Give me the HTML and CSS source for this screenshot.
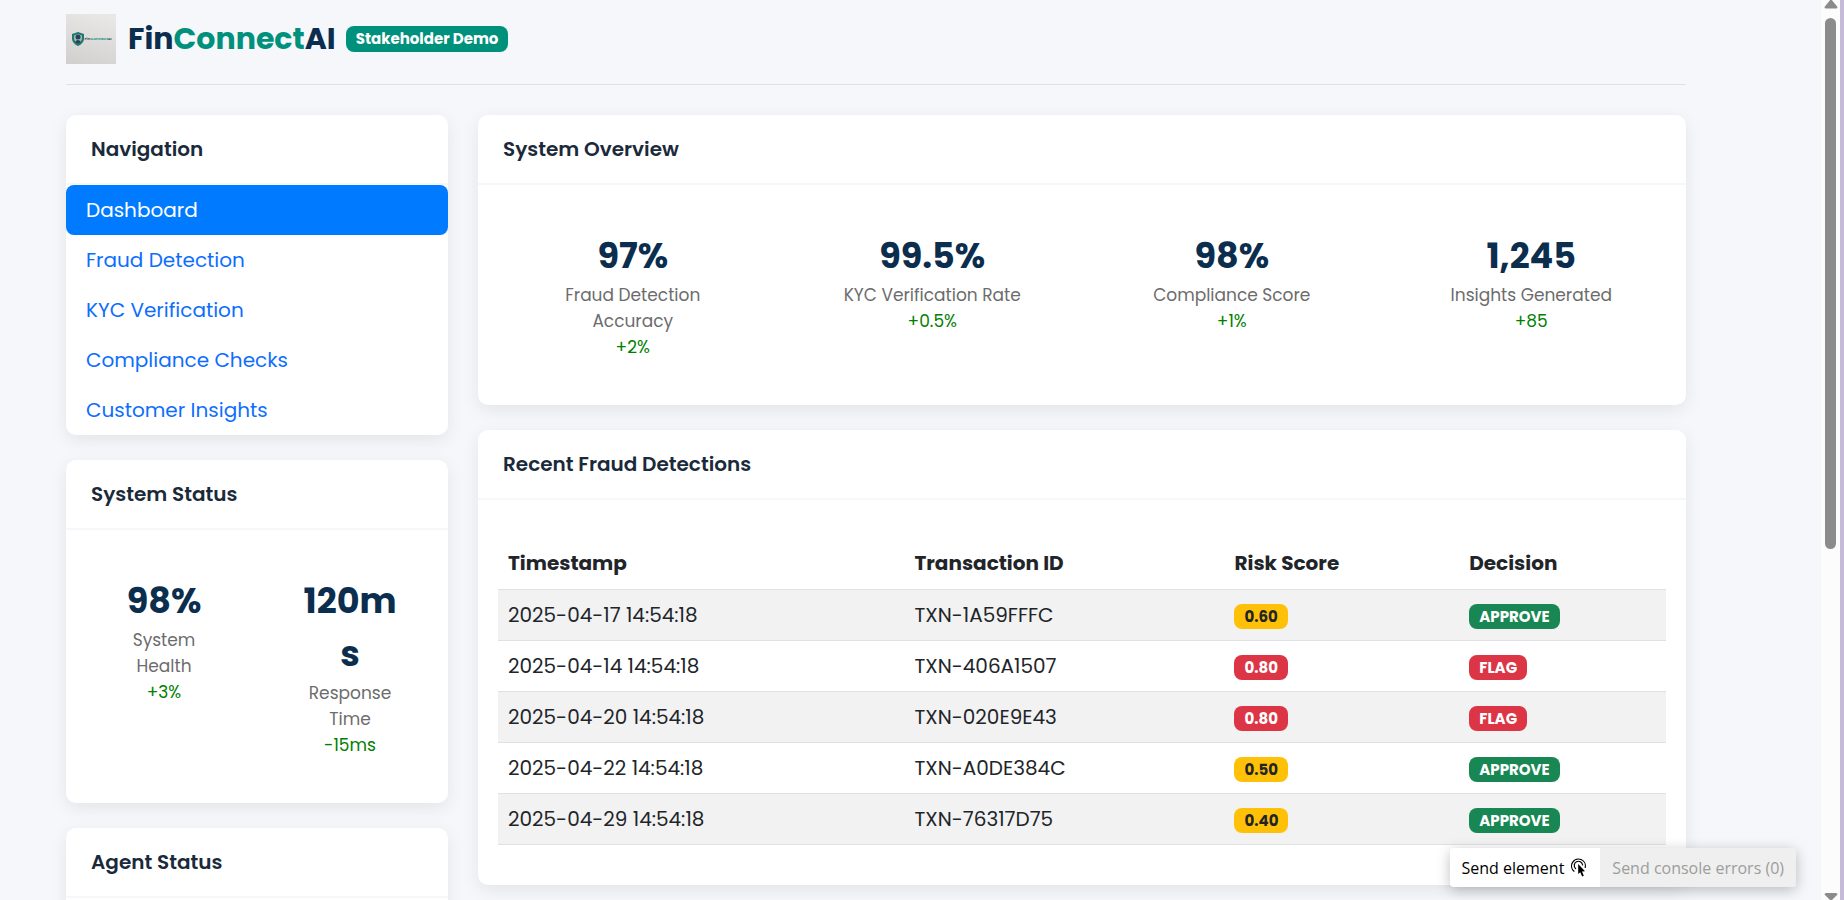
FILE: index.html
```html
<!DOCTYPE html>
<html lang="en">
<head>
<meta charset="utf-8">
<title>FinConnectAI</title>
<link rel="stylesheet" href="styles.css">
</head>
<body>
<div class="window">
  <div class="page">
    <header class="header">
      <svg class="logo" viewBox="0 0 50 50" role="img" aria-label="FinConnectAI logo">
        <defs>
          <linearGradient id="paper" x1="0.6" y1="0" x2="0.3" y2="1">
            <stop offset="0" stop-color="#e9e7e6"/>
            <stop offset="1" stop-color="#d2d1d0"/>
          </linearGradient>
        </defs>
        <rect width="50" height="50" fill="url(#paper)"/>
        <path d="M12 18 L18 20 V25 Q17.500 29.500 12 32 Q6.500 29.500 6 25 V20 Z" fill="#1c7a6c"/>
        <path d="M12 20 L16 21.500 V25 Q15.500 28 12 30 Q8.500 28 8 25 V21.500 Z" fill="#9fb5b6"/>
        <circle cx="12" cy="23" r="2.500" fill="#24425a"/>
        <path d="M9 28 Q12 24 15 28 L12 30 Z" fill="#24425a"/>
        <text class="logo-text" x="18.500" y="26"><tspan fill="#2a4358">Fin</tspan><tspan fill="#149177">Connect</tspan><tspan fill="#2a4358">AI</tspan></text>
      </svg>
      <h1 class="brand">Fin<span class="brand-accent">Connect</span>AI</h1>
      <span class="badge badge-demo">Stakeholder Demo</span>
    </header>

    <div class="columns">
      <div class="stack">
        <nav class="card" aria-labelledby="nav-title">
          <h2 class="card-title" id="nav-title">Navigation</h2>
          <a class="nav-link active" href="#dashboard">Dashboard</a>
          <a class="nav-link" href="#fraud">Fraud Detection</a>
          <a class="nav-link" href="#kyc">KYC Verification</a>
          <a class="nav-link" href="#compliance">Compliance Checks</a>
          <a class="nav-link" href="#insights">Customer Insights</a>
        </nav>
        <section class="card">
          <h2 class="card-title">System Status</h2>
          <div class="metrics">
            <div class="metric"><div class="value">98%</div><div class="label">System Health</div><div class="delta">+3%</div></div>
            <div class="metric"><div class="value">120ms</div><div class="label">Response Time</div><div class="delta">-15ms</div></div>
          </div>
        </section>
        <section class="card">
          <h2 class="card-title">Agent Status</h2>
          <div class="metrics"></div>
        </section>
      </div>

      <main class="stack">
        <section class="card">
          <h2 class="card-title">System Overview</h2>
          <div class="metrics">
            <div class="metric"><div class="value">97%</div><div class="label">Fraud Detection Accuracy</div><div class="delta">+2%</div></div>
            <div class="metric"><div class="value">99.5%</div><div class="label">KYC Verification Rate</div><div class="delta">+0.5%</div></div>
            <div class="metric"><div class="value">98%</div><div class="label">Compliance Score</div><div class="delta">+1%</div></div>
            <div class="metric"><div class="value">1,245</div><div class="label">Insights Generated</div><div class="delta">+85</div></div>
          </div>
        </section>
        <section class="card">
          <h2 class="card-title">Recent Fraud Detections</h2>
          <div class="table-wrap">
            <table class="table">
              <colgroup><col class="col-time"><col class="col-id"><col class="col-risk"><col class="col-decision"></colgroup>
              <thead><tr><th scope="col">Timestamp</th><th scope="col">Transaction ID</th><th scope="col">Risk Score</th><th scope="col">Decision</th></tr></thead>
              <tbody>
                <tr><td>2025-04-17 14:54:18</td><td>TXN-1A59FFFC</td><td><span class="badge warning">0.60</span></td><td><span class="badge success">APPROVE</span></td></tr>
                <tr><td>2025-04-14 14:54:18</td><td>TXN-406A1507</td><td><span class="badge danger">0.80</span></td><td><span class="badge danger">FLAG</span></td></tr>
                <tr><td>2025-04-20 14:54:18</td><td>TXN-020E9E43</td><td><span class="badge danger">0.80</span></td><td><span class="badge danger">FLAG</span></td></tr>
                <tr><td>2025-04-22 14:54:18</td><td>TXN-A0DE384C</td><td><span class="badge warning">0.50</span></td><td><span class="badge success">APPROVE</span></td></tr>
                <tr><td>2025-04-29 14:54:18</td><td>TXN-76317D75</td><td><span class="badge warning">0.40</span></td><td><span class="badge success">APPROVE</span></td></tr>
              </tbody>
            </table>
          </div>
        </section>
      </main>
    </div>
  </div>

  <div class="scrollbar" aria-hidden="true">
    <svg class="arrow" viewBox="0 0 14 9"><path d="M7 -1 L13.500 7 Q13.500 8.500 12 8.500 H2 Q0.500 8.500 0.500 7 Z" fill="#8b8b8b"/></svg>
    <div class="track"><div class="thumb"></div></div>
    <svg class="arrow" viewBox="0 0 14 9"><path d="M7 10 L0.500 3.500 Q0.500 2 2 2 H12 Q13.500 2 13.500 3.500 Z" fill="#8b8b8b"/></svg>
  </div>
</div>

<div class="send-bar">
  <button class="send-button" type="button">Send element
    <svg class="pointer" viewBox="0 0 18 20" fill="none" stroke="#000" stroke-width="1.200" stroke-linecap="round">
      <path d="M4 13.200 A6.900 6.900 0 1 1 15.200 9.500"/>
      <path d="M5.600 10.600 A4.200 4.200 0 1 1 12.600 7"/>
      <path d="M8.200 6 V16 L10.200 14.200 L12.200 18.500 L13.800 17.800 L12 13.600 L15 13.300 Z" fill="#000" stroke="none"/>
    </svg>
  </button>
  <button class="send-button" type="button" disabled>Send console errors (0)</button>
</div>
</body>
</html>
```

FILE: styles.css
```css
* { box-sizing: border-box; }

body {
  margin: 0;
  background: #f5f7fb;
  color: #212529;
  font-family: Poppins, Inter, "Liberation Sans", sans-serif;
  font-size: 20px;
  line-height: 30px;
}

.window {
  display: flex;
  height: 100vh;
  overflow: hidden;
}

.page {
  flex: 1;
  padding: 14px 135px 0 66px;
}

.header {
  display: flex;
  align-items: center;
  padding-bottom: 20px;
  border-bottom: 1px solid #dee2e6;
}

.logo { width: 50px; height: 50px; margin-right: 12px; }
.logo-text { font-size: 4px; font-weight: 600; }

.brand {
  margin: 0 10px 0 0;
  color: #0b2e4f;
  font-size: 30px;
  font-weight: 700;
  line-height: 38px;
}
.brand-accent { color: #00917c; }

.badge {
  display: inline-block;
  padding: 5px 10px;
  border-radius: 8px;
  color: #fff;
  font-size: 15px;
  font-weight: 700;
  line-height: 15px;
  vertical-align: middle;
}
.badge-demo { background: #00917c; line-height: 16px; }
.success { background: #198754; }
.danger { background: #dc3545; }
.warning { background: #ffc107; color: #212529; }

.columns {
  display: grid;
  grid-template-columns: minmax(0, 382fr) minmax(0, 1208fr);
  gap: 30px;
  margin-top: 30px;
}

.stack {
  display: flex;
  flex-direction: column;
  gap: 25px;
}

.card {
  border-radius: 10px;
  background: #fff;
  box-shadow: 0 5px 18px rgba(0, 0, 0, 0.08);
}

.card-title {
  margin: 0;
  padding: 19px 25px;
  border-bottom: 2px solid #f5f7fb;
  color: #1b2a3b;
  font-size: 20px;
  font-weight: 600;
  line-height: 30px;
}

.nav-link {
  display: block;
  padding: 10px 20px;
  border-radius: 8px;
  color: #0d6efd;
  text-decoration: none;
}
.nav-link.active { background: #007bff; color: #fff; }

.metrics {
  display: flex;
  min-height: 100px;
  padding: 20px 5px;
}

.metric {
  flex: 1;
  min-width: 0;
  padding: 24px 42px 25px;
  text-align: center;
  overflow-wrap: anywhere;
}
.value {
  color: #0b2e4f;
  font-size: 35px;
  font-weight: 700;
  line-height: 53px;
}
.label, .delta { font-size: 17px; line-height: 26px; }
.label { color: #6c6c6c; }
.delta { color: #008000; }

.table-wrap { padding: 38px 20px 40px; }

.table {
  width: 100%;
  border-collapse: collapse;
  table-layout: fixed;
}
.col-time { width: 34.8%; }
.col-id { width: 27.4%; }
.col-risk { width: 20.1%; }
.col-decision { width: 17.7%; }

.table th, .table td {
  height: 51px;
  padding: 0 10px;
  border-bottom: 1px solid #dee2e6;
  text-align: left;
}
.table th { font-weight: 700; }
.table tbody tr:nth-child(odd) { background: #f2f2f2; }

.scrollbar {
  display: flex;
  flex-direction: column;
  align-items: center;
  width: 23px;
  border-right: 4px solid #c5bad7;
  background: #fcfcfc;
}
.arrow { width: 14px; height: 9px; }
.track { flex: 1; padding: 9px 0; }
.thumb { width: 11px; height: 61.5%; border-radius: 6px; background: #8b8b8b; }

.send-bar {
  position: fixed;
  right: 48px;
  bottom: 13px;
  display: flex;
  border-radius: 4px;
  overflow: hidden;
  box-shadow: 0 3px 14px rgba(0, 0, 0, 0.25);
}
.send-button {
  display: flex;
  align-items: center;
  gap: 6px;
  height: 39px;
  padding: 0 12px;
  border: 0;
  background: #fff;
  color: #000;
  font: 500 16px "Segoe UI", "Open Sans", "Noto Sans", sans-serif;
}
.send-button:disabled { background: #efefef; color: #9d9d9d; }
.pointer { width: 18px; height: 20px; }
```
